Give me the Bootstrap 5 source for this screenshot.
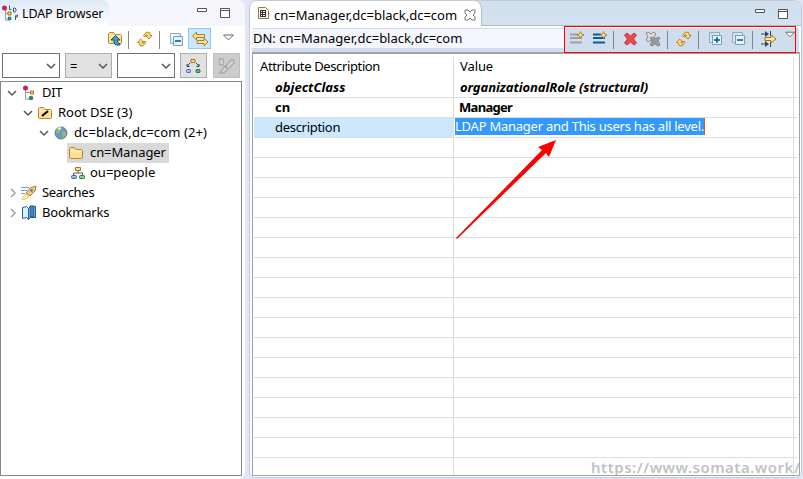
<!DOCTYPE html>
<html lang="en">
<head>
<meta charset="utf-8">
<title>LDAP Browser</title>
<link href="https://cdn.jsdelivr.net/npm/bootstrap@5.3.0/dist/css/bootstrap.min.css" rel="stylesheet">
<style>
body{width:803px;height:479px;overflow:hidden;background:#e1e6f6;font:13px/20px "Noto Sans","Liberation Sans",sans-serif;color:#000;letter-spacing:0}
svg{display:block;flex:none}
.browser{width:245px;height:479px;border-radius:0 7px 7px 0;background:#fff;overflow:hidden}
.browser-head{height:26px;background:#f5f6fb}
.browser-tab{width:109px;height:26px;background:linear-gradient(#dde8f5,#fff);border-radius:0 7px 0 0;padding:4px 0 0 2px}
.browser-tab span{margin-left:3px;font-size:12.5px;letter-spacing:-.1px;white-space:nowrap}
.tools-left{display:grid;grid-template-columns:107px 21px 9px 22px 10px 19px 24px 1fr;height:27px;padding-top:2px}
.vsep{width:1px;height:18px;background:#888;margin-top:3px}
.link-on{width:23px;height:21px;background:#cce8ff;border:1px solid #90c8f6;padding:2px}
.filter{display:grid;grid-template-columns:58px 47px 58px 26px 27px;column-gap:5px;height:28px;padding-left:2px}
.combo{height:25px;border:1px solid #707070;background:#fff;display:flex;align-items:center;justify-content:flex-end;padding-right:3px}
.combo.grey{background:#e1e1e1;border-color:#adadad}
.tool-btn{width:27px;height:25px;background:#e1e1e1;border:1px solid #adadad;padding:4px}
.tool-btn.off{background:#ccc;border-color:#bfbfbf;margin-left:2px}
.tree{width:242px;height:395px;border:1px solid #828790;padding-top:1px}
.node{height:20px;display:flex;align-items:center}
.node>.chev{width:10px;margin-right:4px}
.node span{position:relative;top:-1px}
.node svg+span{margin-left:5px}
.node .chosen svg+span{margin-left:6px;letter-spacing:-.1px}
.lv0{padding-left:6px}.lv1{padding-left:22px}.lv2{padding-left:38px}.lv3{padding-left:66px}
.tight{letter-spacing:-.3px}
.chosen{background:#d9d9d9;width:102px;height:20px;display:flex;align-items:center;padding-left:1px}
.editor{width:553px;height:478px;margin-left:4px;border:1px solid #c5c9d0;border-radius:8px 8px 6px 6px;background:#fff;overflow:hidden}
.editor-head{height:25px;background:linear-gradient(#cfdfee,#d4e2f0);border-bottom:1px solid #b5b9c2}
.editor-tab{width:232px;height:25px;background:#fff;border-right:1px solid #b5b9c2;border-radius:7px 8px 0 0;padding:4px 0 0 7px}
.editor-tab span{margin:0 6px 0 5px;width:184px;white-space:nowrap}
.dnbar{height:24px;margin:2px 2px 0;background:#cfdded}
.dn{width:312px;height:19px;line-height:18px;background:#f4f6fc;padding-left:1px;margin-top:1px}
.tools-right{width:232px;height:27px;margin-top:-2px;border:1px solid #f00;display:grid;grid-template-columns:23px 21px 10px 22px 22px 9px 22px 10px 23px 21px 8px 25px 1fr;padding:4px 0 0 4px;position:relative}
.tools-right .vsep{background:#7c8794}
.attrs{width:548px;height:424px;margin-left:2px;border:1px solid #9fa2aa;border-top-width:2px}
.arow{display:grid;grid-template-columns:200px 340px 1fr;height:20px;line-height:19px;border-bottom:1px solid #dedede;margin:0 2px 0 1px}
.arow>div{border-right:1px solid #dedede;white-space:nowrap}
.arow.hd{height:24px;border-bottom:0;padding-top:3px}
.arow.last{height:17px;border-bottom:0}
.arow>div:first-child{padding-left:21px}.arow>div+div{padding-left:6px}
.arow.hd>div{letter-spacing:-.37px}
.arow.hd>div+div{letter-spacing:-.1px}
.arow.hd>div:first-child{padding-left:6px}
.arow.on>div:first-child{background:#cce8ff}
.arow.on>div+div{padding-left:1px}
.strongname{letter-spacing:.05px;font-weight:700;font-style:italic}
.edit{display:inline-block;vertical-align:top;height:17px;line-height:16px;width:250px;letter-spacing:-.24px;color:#fff;background:#3399ff;border-right:1px solid #cc6600}
.pointer{position:absolute;left:450px;top:135px}
.watermark{position:absolute;left:591px;top:457px;color:rgba(165,165,165,.7);font-weight:600;font-size:15px;letter-spacing:.5px}
</style>
<script src="https://cdn.jsdelivr.net/npm/bootstrap@5.3.0/dist/js/bootstrap.bundle.min.js"></script>
</head>
<body class="position-relative">
<svg width="0" height="0" class="position-absolute">
<defs>
<symbol id="down" viewBox="0 0 10 10"><path d="M1 3l4 4 4-4" fill="none" stroke="#555" stroke-width="1.5"/></symbol>
<symbol id="right" viewBox="0 0 10 10"><path d="M4 1l4 4-4 4" fill="none" stroke="#a0a0a0" stroke-width="1.5"/></symbol>
<symbol id="menu" viewBox="0 0 11 7"><path d="M.5 1h10L5.500 6z" fill="#fff" stroke="#666"/></symbol>
<symbol id="minwin" viewBox="0 0 10 12"><path d="M.5.5h9v3h-9z" fill="#fff" stroke="#555"/></symbol>
<symbol id="maxwin" viewBox="0 0 10 12"><path d="M.5.500h9v9h-9zM.5 2.500h9" fill="#fff" stroke="#555"/></symbol>
<symbol id="sync" viewBox="0 0 16 16"><g fill="#f9dc86" stroke="#b37d17" stroke-width=".9"><path d="M6.500 4.500L9.500 1l3 .5 1 3H15L12 8 8.500 5h2L9.500 3.500 7.500 6z"/><path d="M9 11.500L6 15l-3-.5-1-3H.5L3.500 8 7 11H5l1 1.500L8 10z"/></g></symbol>
<symbol id="stack" viewBox="0 0 16 16"><path d="M1.500 1.500h10v3M1.500 1.500v10h3" fill="#d8ecfa" stroke="#89adc9"/><path d="M4.500 4.500h9v9h-9z" fill="#e7f4ff" stroke="#7d9db7"/><path d="M6 9h6" stroke="#004f91" stroke-width="1.400"/></symbol>
<symbol id="folder" viewBox="0 0 16 16"><path d="M1.500 13V3.500l1-1h4L8 4.500h5.500l1 1v7.500l-1 .5h-11z" fill="#fbdf94" stroke="#b98632"/><path d="M2 6h12" stroke="#fff1c7"/></symbol>
<symbol id="dit" viewBox="0 0 16 16"><path d="M4.500 4v10H9M5 7.500h5" fill="none" stroke="#929c9a"/><circle cx="4.500" cy="3" r="2.500" fill="#d11f50"/><path d="M9.500 6h3v3h-3z" fill="#fbd879" stroke="#aa7110"/><circle cx="10" cy="13" r="2.300" fill="#31865b"/></symbol>
<symbol id="org" viewBox="1 2 14 13"><path d="M8 5v3M3.500 10V8h9v2" fill="none" stroke="#555e78"/><path d="M5.500 2.500h5v3h-5z" fill="#fbdc87" stroke="#a87621"/><rect x="1.500" y="10.500" width="5" height="3" rx="1" fill="#9dbce9" stroke="#3c5f9c"/><rect x="9.500" y="10.500" width="5" height="3" rx="1" fill="#92cf83" stroke="#26733b"/></symbol>
<symbol id="newline" viewBox="0 0 16 16"><path d="M1 3.500h8M1 7h12M1 11.500h12" stroke="currentColor" stroke-width="1.800"/><path d="M11.500.5l1 2.500 2.500 1-2.500 1-1 2.500-1-2.500L8 4l2.500-1z" fill="#fff2a8" stroke="#b58418"/></symbol>
</defs>
</svg>
<main class="d-flex">
<section class="browser">
<div class="browser-head d-flex">
<div class="browser-tab d-flex"><svg width="17" height="18"><path d="M3.500 4v12H7M4 9.500h4" fill="none" stroke="#929c9a"/><circle cx="2.500" cy="4" r="2.500" fill="#d11f50"/><path d="M6 8h3v3H6z" fill="#fbd879" stroke="#aa7110"/><circle cx="7.500" cy="14.500" r="2" fill="#31865b"/><path d="M7.500 1.500v4h2M11.500 4v4h1l1.500-1V5l-1-1zM13.500 16v-4l1-1h1v2h-2" fill="none" stroke="#24638f"/></svg><span>LDAP Browser</span></div>
<svg class="ms-auto mt-2" width="10" height="12"><use href="#minwin"/></svg><svg class="mt-2" width="10" height="12" style="margin:0 15px 0 13px"><use href="#maxwin"/></svg>
</div>
<div class="tools-left">
<i></i>
<svg width="16" height="20" viewBox="0 -2 16 20"><use href="#folder" width="16" height="16"/><path d="M4 10l4.500-4.500L13 10h-2.500v2l2.500 2v1H9l-2-2v-3z" fill="#4b9cc3" stroke="#17517b"/></svg>
<i class="vsep"></i>
<svg width="16" height="20" viewBox="0 -3 16 20"><use href="#sync" width="16" height="16"/></svg>
<i class="vsep"></i>
<svg class="mt-1" width="16" height="16"><use href="#stack"/></svg>
<div class="link-on"><svg width="19" height="16" viewBox="0 0 19 16"><path d="M1.500 5l4-4v2.500h8v3h-8V9zM17 11l-4-4v2.500H6v3h7V15z" fill="#fce29a" stroke="#b47d16"/></svg></div>
<svg style="margin:6px 0 0 11px" width="11" height="7"><use href="#menu"/></svg>
</div>
<div class="filter">
<div class="combo"><svg width="10" height="10"><use href="#down"/></svg></div>
<div class="combo grey"><span class="me-auto ps-1">=</span><svg width="10" height="10"><use href="#down"/></svg></div>
<div class="combo"><svg width="10" height="10"><use href="#down"/></svg></div>
<div class="tool-btn"><svg width="17" height="16" viewBox="0 0 17 16"><path d="M6 1.500h4v3H6z" fill="#ffe276" stroke="#a87317"/><path d="M5 5L2.500 8M2 6v2.500h2.500M11 5l3 3M14 6v2.500h-2.500" fill="none" stroke="#233e78"/><rect x="1.500" y="11.500" width="4" height="3" rx="1" fill="#a7c5ef" stroke="#405b9a"/><rect x="11" y="11.500" width="4" height="3" rx="1" fill="#63bd79" stroke="#22713c"/></svg></div>
<div class="tool-btn off"><svg width="17" height="17" viewBox="0 0 17 17"><path d="M1.500 1h3l1 1v4l-1 1h-2l-1-1zM8 8l5-6h3v3l-6 6zM7 8l3 3-4 4H1.500z" fill="#d4d4d4" stroke="#aaa" stroke-width="1.300"/></svg></div>
</div>
<div class="tree">
<div class="node lv0"><svg class="chev" height="10"><use href="#down"/></svg><svg width="16" height="16"><use href="#dit"/></svg><span class="tight">DIT</span></div>
<div class="node lv1"><svg class="chev" height="10"><use href="#down"/></svg><svg width="16" height="16"><use href="#folder"/><path d="M5 11l6-5" stroke="#000" stroke-width="2"/></svg><span>Root DSE (3)</span></div>
<div class="node lv2"><svg class="chev" height="10"><use href="#down"/></svg><svg width="16" height="16"><circle cx="8" cy="8" r="6" fill="#5f9bd0" stroke="#65808c"/><path d="M3 5l4-2 1 3-3 3-2-1zM9 6l4 1v3l-3 3-1-3z" fill="#a3b066"/><path d="M5 4l3-1" stroke="#eef9ff" stroke-width="2"/></svg><span style="letter-spacing:.1px">dc=black,dc=com (2+)</span></div>
<div class="node lv3"><div class="chosen"><svg width="16" height="16"><use href="#folder"/></svg><span>cn=Manager</span></div></div>
<div class="node lv3"><svg class="ms-1" width="14" height="13"><use href="#org"/></svg><span>ou=people</span></div>
<div class="node lv0"><svg class="chev" height="10"><use href="#right"/></svg><svg width="16" height="16"><path d="M0 2.500h8M0 5.500h6M0 8.500h4" stroke="#77a0ca"/><path d="M5 8l4-5 6-2-1 5-5 5z" fill="#f1c486" stroke="#a98245"/><path d="M4.500 9l3.500 3-3 2-4 1 1-3z" fill="#fff19c" stroke="#e3cc7c"/><circle cx="10.500" cy="5.500" r="1.200" fill="#406b98"/></svg><span class="tight">Searches</span></div>
<div class="node lv0"><svg class="chev" height="10"><use href="#right"/></svg><svg width="16" height="16"><path d="M1.500 2.500l4-1 2 2v11l-2-2-4 1zM7.500 3.500l2-2h5v11h-5l-2 2z" fill="#d8efff" stroke="#315f8d"/><path d="M9 1h4v12l-2-2-2 2z" fill="#368bd0" stroke="#1d5689"/></svg><span style="letter-spacing:-.2px">Bookmarks</span></div>
</div>
</section>
<section class="editor">
<div class="editor-head d-flex">
<div class="editor-tab d-flex"><svg width="12" height="16" viewBox="0 0 12 16"><path d="M1.500 2.500h7l3 3v8h-10z" fill="#fffbe7" stroke="#897c59"/><path d="M3 5h6v7H3z" fill="#333"/><path d="M4 6h1v1H4zM6 6h2v1H6zM4 8h1v1H4zM6 8h2v1H6zM4 10h1v1H4zM6 10h2v1H6z" fill="#fff"/></svg><span>cn=Manager,dc=black,dc=com</span><svg width="12" height="12" style="margin-top:4px" viewBox="0 0 12 12"><path d="M1 1h3l2 2 2-2h3v3L9 6l2 2v3H8L6 9l-2 2H1V8l2-2-2-2z" fill="#fff" stroke="#777"/></svg></div>
<svg class="ms-auto mt-2" width="10" height="12"><use href="#minwin"/></svg><svg class="mt-2" width="10" height="12" style="margin:0 13px 0 13px"><use href="#maxwin"/></svg>
</div>
<div class="dnbar d-flex">
<div class="dn">DN: cn=Manager,dc=black,dc=com</div>
<div class="tools-right">
<svg width="16" height="16" color="#a0a0a0"><use href="#newline"/></svg>
<svg width="16" height="16" color="#13579a"><use href="#newline"/></svg>
<i class="vsep mt-0"></i>
<svg width="16" height="16"><path d="M1.500 4l2.500-2 3.500 3L11 2l2.500 2-3 4 3 4-2.500 2-3.500-3L4 14l-2.500-2 3-4z" fill="#eb4b4b" stroke="#c4323b"/></svg>
<svg width="17" height="16"><path d="M1 2l2-1 3 2 3-2 2 2-2 3 2 3-2 2-3-2-3 2-2-2 2-3z" fill="#ddd" stroke="#888"/><path d="M5 7l2-1 3 2 3-2 2 1-2 3 2 4-2 1-3-2-3 2-2-1 2-4z" fill="#999" stroke="#8b8b8b"/></svg>
<i class="vsep mt-0"></i>
<svg width="16" height="16"><use href="#sync"/></svg>
<i class="vsep mt-0"></i>
<svg width="16" height="16"><use href="#stack"/><path d="M9 6v6" stroke="#004f91" stroke-width="1.400"/></svg>
<svg width="16" height="16"><use href="#stack"/></svg>
<i class="vsep mt-0"></i>
<svg width="17" height="16"><path d="M1 3h5M1 13h5M10.500 0v5M10.500 11v5" stroke="#31485b"/><path d="M5 0l4 3-4 3zM5 10l4 3-4 3z" fill="#31485b"/><path d="M5 6.500h6V4l5 4-5 4V9.500H5z" fill="#ffe69a" stroke="#aa7119"/></svg>
<svg width="10" height="7"><use href="#menu"/></svg>
</div>
</div>
<div class="attrs">
<div class="arow hd"><div>Attribute Description</div><div>Value</div></div>
<div class="arow"><div class="strongname">objectClass</div><div class="strongname" style="letter-spacing:-.07px">organizationalRole (structural)</div></div>
<div class="arow"><div class="fw-bold">cn</div><div class="fw-bold" style="letter-spacing:-.7px;padding-left:5px">Manager</div></div>
<div class="arow on"><div style="letter-spacing:-.3px">description</div><div><span class="edit">LDAP Manager and This users has all level.</span></div></div>
<div class="arow"><div></div><div></div></div><div class="arow"><div></div><div></div></div><div class="arow"><div></div><div></div></div><div class="arow"><div></div><div></div></div>
<div class="arow"><div></div><div></div></div><div class="arow"><div></div><div></div></div><div class="arow"><div></div><div></div></div><div class="arow"><div></div><div></div></div>
<div class="arow"><div></div><div></div></div><div class="arow"><div></div><div></div></div><div class="arow"><div></div><div></div></div><div class="arow"><div></div><div></div></div>
<div class="arow"><div></div><div></div></div><div class="arow"><div></div><div></div></div><div class="arow"><div></div><div></div></div><div class="arow"><div></div><div></div></div>
<div class="arow last"><div></div><div></div></div>
</div>
</section>
</main>
<svg class="pointer" width="110" height="110" viewBox="450 135 110 110"><path d="M456 238L542 150l-4-3 18-7-7 17-3-4L457 239z" fill="#f00"/></svg>
<div class="watermark">https://www.somata.work/</div>
</body>
</html>
